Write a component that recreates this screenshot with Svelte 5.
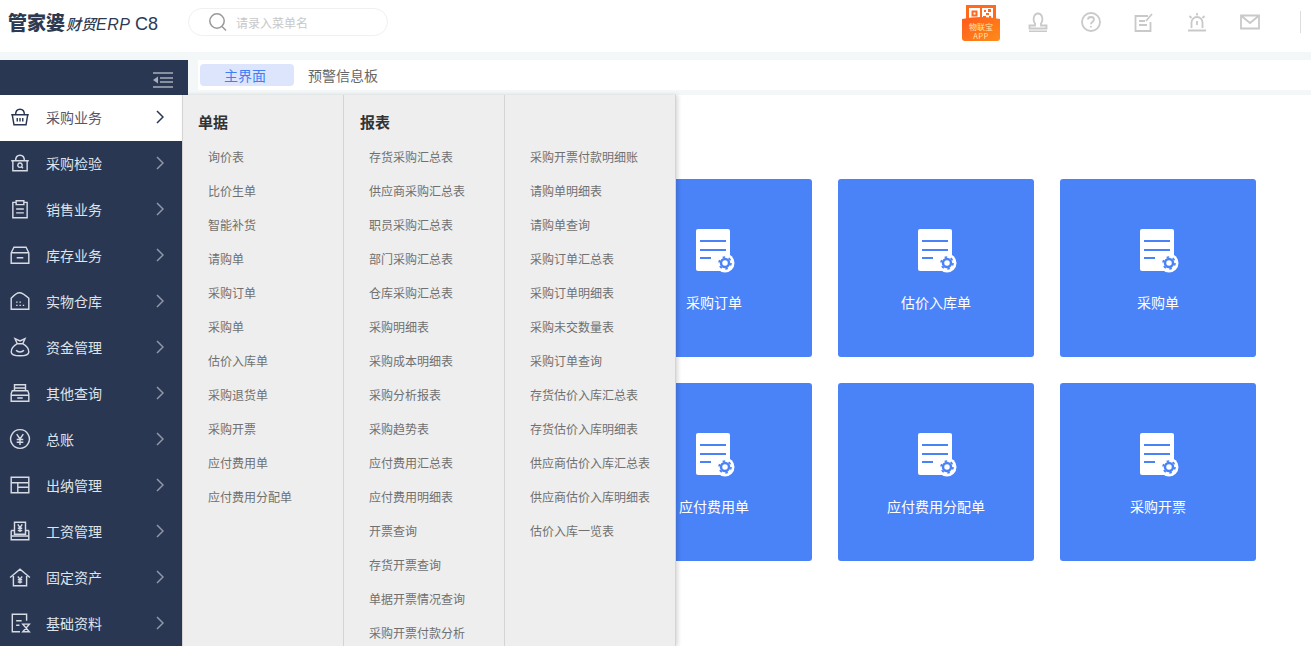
<script lang="ts">
  const menu = [
    { name: '采购业务', d: 'M2 8h16M3 8l1.5 9h11L17 8M6 8c0-3 1.600-5 4-5s4 2 4 5M7.500 11v3M10 11v3M12.500 11v3' },
    { name: '采购检验', d: 'M2 8h16M3.500 8v9h13V8M6 8c0-3 1.600-5 4-5s4 2 4 5M10 10a2 2 0 1 0 .01 0M11.500 13.500l1.200 1.200' },
    { name: '销售业务', d: 'M6 4H3.500v14h13V4H14M6.500 2.500h7V6h-7zM6.500 10h7M6.500 13.500h7' },
    { name: '库存业务', d: 'M4.500 3h11L18 8v9.500H2V8zM2 8h16M7 12.500h6' },
    { name: '实物仓库', d: 'M2 7.500Q7 2 10 2.500T18 7.500V17.500H2zM6.500 11h1.300M9.500 11h1.300M6.500 14h1.300M9.500 14h1.300M12.500 14h1.300' },
    { name: '资金管理', d: 'M5.500 2.500l4.500 2 4.500-2L12.500 7h-5zM7.500 7C4 9 2 12 2 14.500c0 2.500 3 3.500 8 3.500s8-1 8-3.500C18 12 16 9 12.500 7M6.500 13c1.500 2 5.500 2 7 0' },
    { name: '其他查询', d: 'M5 2.500h10V8H5zM3 8h14l1 2.500v7H2v-7zM2 12h16M7.500 14.500h5M5 5.500h10' },
    { name: '总账', d: 'M10 1.500a8.500 8.500 0 1 0 .01 0M7 5.500l3 4.500 3-4.500M10 10v5.500M7 10.500h6M7 13h6' },
    { name: '出纳管理', d: 'M2 3h16v14H2zM2 8h16M8 8v9M8 12h10' },
    { name: '工资管理', d: 'M5 2h10v11H5zM2 9.500h3M15 9.500h3M2 9.500v8.500h16V9.500M2 14.500h16M8 4l2 3 2-3M10 7v4M8 7.500h4M8 9.500h4' },
    { name: '固定资产', d: 'M1 10.500L10 3l9 7.500M4 9v9h12V9M8 9.500l2 2.500 2-2.500M10 12v4M8 12.500h4M8 14.500h4' },
    { name: '基础资料', d: 'M16 8V2H3v16h7M6.500 8h5M6.500 12h3M12.500 11h6l-6 7h6z' }
  ];

  const bills = ['询价表', '比价生单', '智能补货', '请购单', '采购订单', '采购单', '估价入库单', '采购退货单', '采购开票', '应付费用单', '应付费用分配单'];
  const reports = ['存货采购汇总表', '供应商采购汇总表', '职员采购汇总表', '部门采购汇总表', '仓库采购汇总表', '采购明细表', '采购成本明细表', '采购分析报表', '采购趋势表', '应付费用汇总表', '应付费用明细表', '开票查询', '存货开票查询', '单据开票情况查询', '采购开票付款分析'];
  const reports2 = ['采购开票付款明细账', '请购单明细表', '请购单查询', '采购订单汇总表', '采购订单明细表', '采购未交数量表', '采购订单查询', '存货估价入库汇总表', '存货估价入库明细表', '供应商估价入库汇总表', '供应商估价入库明细表', '估价入库一览表'];

  const cards = ['请购单', '采购订单', '估价入库单', '采购单', '采购退货单', '应付费用单', '应付费用分配单', '采购开票'];
</script>

<div class="page">
  <header class="topbar">
    <div class="logo">
      <span class="logo-main">管家婆</span><span class="logo-sub">财贸</span><span class="logo-erp">ERP</span><span class="logo-ver">C8</span>
    </div>
    <div class="search">
      <svg class="search-icon" viewBox="0 0 20 20" width="20" height="20">
        <circle cx="9" cy="9" r="7.200" />
        <path d="M14 14.500l4 4" />
      </svg>
      <span>请录入菜单名</span>
    </div>
    <div class="tools">
      <svg class="app-badge" viewBox="0 0 38 36" width="38" height="36">
        <defs>
          <linearGradient id="badge" x1="0" y1="0" x2="1" y2="1">
            <stop offset="0" stop-color="#ff5a1c" />
            <stop offset="1" stop-color="#ff8c1a" />
          </linearGradient>
        </defs>
        <rect x="4" y="0" width="30" height="16" fill="#ff6a1c" />
        <rect x="7" y="3" width="11" height="11" fill="#fff" />
        <rect x="9.500" y="5.500" width="6" height="6" fill="#ff6a1c" />
        <rect x="11.500" y="7.500" width="2" height="2" fill="#fff" />
        <rect x="20" y="3" width="11" height="11" fill="#fff" />
        <path d="M22 5h2v2h-2zM26 4h3v3h-3zM24 8h3v2h-3zM21 11h3v2h-3zM27 11h2v2h-2z" fill="#ff6a1c" />
        <path d="M0 14q19-4 38 0v19q0 3-3 3H3q-3 0-3-3z" fill="url(#badge)" />
        <text x="19" y="24.500" class="badge-cn">物联宝</text>
        <text x="19" y="33.500" class="badge-en">APP</text>
      </svg>
      <svg class="tool" viewBox="0 0 20 20"><path d="M7 11.500C4.500 8.500 5.500 1.500 10 1.500s5.500 7 3 10V13.500h5.500v3H1.500v-3H7zM1 19.500h18" /></svg>
      <svg class="tool" viewBox="0 0 20 20"><circle cx="10" cy="10" r="9" /><path d="M7 7.500C7 5.500 8.500 5 10 5s3 1 3 2.500c0 2.200-3 2.300-3 4.800M10 14v1.500" /></svg>
      <svg class="tool" viewBox="0 0 20 20"><path d="M14 4H1.500v15h15V10M5 9h6M5 13h8M12 9l6-7" /></svg>
      <svg class="tool" viewBox="0 0 20 20"><path d="M4.500 16V10.500a5.500 5.500 0 0 1 11 0V16M1 18.500h18M10 9v4M10 1v2.500M2.500 4l2 2M17.500 4l-2 2" /></svg>
      <svg class="tool mail" viewBox="0 0 20 20"><path d="M1 3.500h18v13H1zM1.500 4L10 11l8.500-7" /></svg>
      <span class="divider"></span>
    </div>
  </header>

  <div class="body">
    <aside class="sidebar">
      <div class="toggle">
        <svg viewBox="0 0 20 16" width="20" height="16"><path d="M0 1h20M7 6h13M7 10h13M0 15h20" /><path class="fill" d="M0 8l5-3.500v7z" /></svg>
      </div>
      <nav>
        {#each menu as item, i}
          <div class="nav-item" class:active={i === 0}>
            <svg class="nav-icon" viewBox="0 0 20 20" width="22" height="22"><path d={item.d} /></svg>
            <span class="nav-name">{item.name}</span>
            <svg class="chevron" viewBox="0 0 8 14" width="8" height="14"><path d="M1 1l6 6-6 6" /></svg>
          </div>
        {/each}
      </nav>
    </aside>

    <main class="main">
      <div class="tabs">
        <div class="tab current">主界面</div>
        <div class="tab">预警信息板</div>
      </div>
      <div class="content">
        <div class="grid">
          {#each cards as card}
            <div class="card">
              <svg class="doc" viewBox="0 0 44 44" width="44" height="44">
                <rect x="4" y="0" width="34" height="42" rx="2" fill="#fff" />
                <path d="M8 12h26M8 21h26M8 29h11" stroke="#4a82f7" stroke-width="2" />
                <circle cx="33" cy="34" r="9.500" fill="#fff" />
                <circle cx="33" cy="34" r="4" fill="none" stroke="#4a82f7" stroke-width="2.500" />
                <circle cx="33" cy="34" r="6" fill="none" stroke="#4a82f7" stroke-width="1.600" stroke-dasharray="2.600 3.680" />
              </svg>
              <span>{card}</span>
            </div>
          {/each}
        </div>
      </div>
    </main>

    <div class="flyout">
      <section class="col">
        <h3>单据</h3>
        {#each bills as b}<div class="link">{b}</div>{/each}
      </section>
      <section class="col">
        <h3>报表</h3>
        {#each reports as r}<div class="link">{r}</div>{/each}
      </section>
      <section class="col wide">
        <h3>&nbsp;</h3>
        {#each reports2 as r}<div class="link">{r}</div>{/each}
      </section>
    </div>
  </div>
</div>

<style>
  :global(body) {
    margin: 0;
    overflow: hidden;
    background: #fff;
  }

  .page {
    height: 646px;
    overflow: hidden;
    font-family: 'Noto Sans CJK SC', 'Liberation Sans', sans-serif;
    display: flex;
    flex-direction: column;
  }

  .topbar {
    height: 52px;
    flex: none;
    display: flex;
    align-items: center;
    background: #fff;
  }

  .logo {
    width: 188px;
    padding-left: 8px;
    box-sizing: border-box;
    display: flex;
    align-items: baseline;
    color: #2e3a52;
    white-space: nowrap;
    margin-top: -10px;
  }

  .logo-main {
    font-size: 19px;
    font-weight: 900;
    width: 58px;
  }

  .logo-sub {
    font-size: 15px;
    font-style: italic;
    font-weight: 500;
    width: 30px;
  }

  .logo-erp {
    font-family: 'Liberation Sans', sans-serif;
    font-size: 16px;
    font-style: italic;
    width: 39px;
    letter-spacing: 0.500px;
  }

  .logo-ver {
    font-family: 'Liberation Sans', sans-serif;
    font-size: 18px;
  }

  .search {
    width: 200px;
    height: 28px;
    box-sizing: border-box;
    border: 1px solid #f0f0f0;
    border-radius: 14px;
    display: flex;
    align-items: center;
    gap: 8px;
    padding-left: 19px;
    margin-top: -8px;
    font-size: 12px;
    color: #c8c8c8;
  }

  .search-icon {
    fill: none;
    stroke: #999;
    stroke-width: 1.500;
  }

  .tools {
    margin-left: auto;
    display: flex;
    align-items: center;
    margin-top: -8px;
    padding-right: 10px;
  }

  .app-badge {
    margin-right: 28px;
    margin-top: 2px;
  }

  .badge-cn {
    fill: #ffe6a8;
    font-size: 8px;
    text-anchor: middle;
  }

  .badge-en {
    fill: #ffe6a8;
    font-size: 7.500px;
    text-anchor: middle;
    letter-spacing: 0.500px;
  }

  .tool {
    width: 20px;
    height: 20px;
    margin-right: 33px;
    fill: none;
    stroke: #c9c9c9;
    stroke-width: 1.800;
  }

  .mail {
    margin-right: 40px;
  }

  .divider {
    width: 1px;
    height: 22px;
    background: #ddd;
  }

  .body {
    flex: 1;
    min-height: 0;
    display: flex;
    position: relative;
    background: #f4f7f8;
    padding-top: 8px;
  }

  .sidebar {
    width: 188px;
    flex: none;
    background: #2a3753;
  }

  .toggle {
    height: 35px;
    box-sizing: border-box;
    padding: 5px 15px 0 0;
    display: flex;
    align-items: center;
    justify-content: flex-end;
  }

  .toggle svg {
    fill: none;
    stroke: #a8aebb;
    stroke-width: 1.500;
  }

  .toggle .fill {
    fill: #a8aebb;
    stroke: none;
  }

  .nav-item {
    height: 46px;
    width: 182px;
    box-sizing: border-box;
    padding: 0 0 2px 9px;
    display: flex;
    align-items: center;
    color: #dfe3ea;
    font-size: 14px;
    background: #2a3753;
  }

  .nav-item.active {
    background: #fff;
    color: #55566a;
  }

  .nav-icon {
    fill: none;
    stroke: #d7dbe4;
    stroke-width: 1.300;
    flex: none;
    margin-right: 15px;
  }

  .active .nav-icon {
    stroke: #2a3753;
  }

  .nav-name {
    flex: 1;
  }

  .chevron {
    fill: none;
    stroke: #8f97a8;
    stroke-width: 1.500;
    margin-right: 18px;
  }

  .active .chevron {
    stroke: #2a3753;
  }

  .main {
    flex: 1;
    min-width: 0;
    display: flex;
    flex-direction: column;
  }

  .tabs {
    height: 30px;
    flex: none;
    margin-left: 10px;
    background: #fff;
    display: flex;
    align-items: center;
    padding-left: 2px;
    font-size: 14px;
    color: #666;
  }

  .tab {
    height: 22px;
    line-height: 22px;
    padding: 0 14px;
  }

  .tab.current {
    width: 94px;
    box-sizing: border-box;
    padding: 0 4px 0 0;
    text-align: center;
    background: #dde5fd;
    border-radius: 4px;
    color: #3f7ef7;
  }

  .content {
    flex: 1;
    margin-top: 5px;
    background: #fff;
    padding: 84px 0 0 206px;
  }

  .grid {
    display: grid;
    grid-template-columns: repeat(4, 196px);
    grid-auto-rows: 178px;
    gap: 26px;
  }

  .card {
    background: #4a82f7;
    border-radius: 3px;
    color: #fff;
    font-size: 14px;
    display: flex;
    flex-direction: column;
    align-items: center;
    padding-top: 50px;
    box-sizing: border-box;
  }

  .doc {
    margin-bottom: 19px;
  }

  .flyout {
    position: absolute;
    left: 182px;
    top: 43px;
    bottom: 0;
    width: 494px;
    display: flex;
    background: #eee;
    box-shadow: 2px 0 4px rgba(0, 0, 0, 0.15);
    overflow: hidden;
  }

  .col {
    width: 161px;
    box-sizing: border-box;
    border-left: 1px solid #d4d4d4;
    flex: none;
  }

  .col.wide {
    width: 172px;
    border-right: 1px solid #d4d4d4;
  }

  h3 {
    margin: 0;
    height: 45px;
    line-height: 54px;
    padding-left: 15px;
    font-size: 15px;
    font-weight: 700;
    color: #333;
  }

  .col:nth-child(2) h3 {
    padding-left: 16px;
  }

  .link {
    height: 34px;
    line-height: 34px;
    padding-left: 25px;
    font-size: 12px;
    color: #707070;
    white-space: nowrap;
  }
</style>
